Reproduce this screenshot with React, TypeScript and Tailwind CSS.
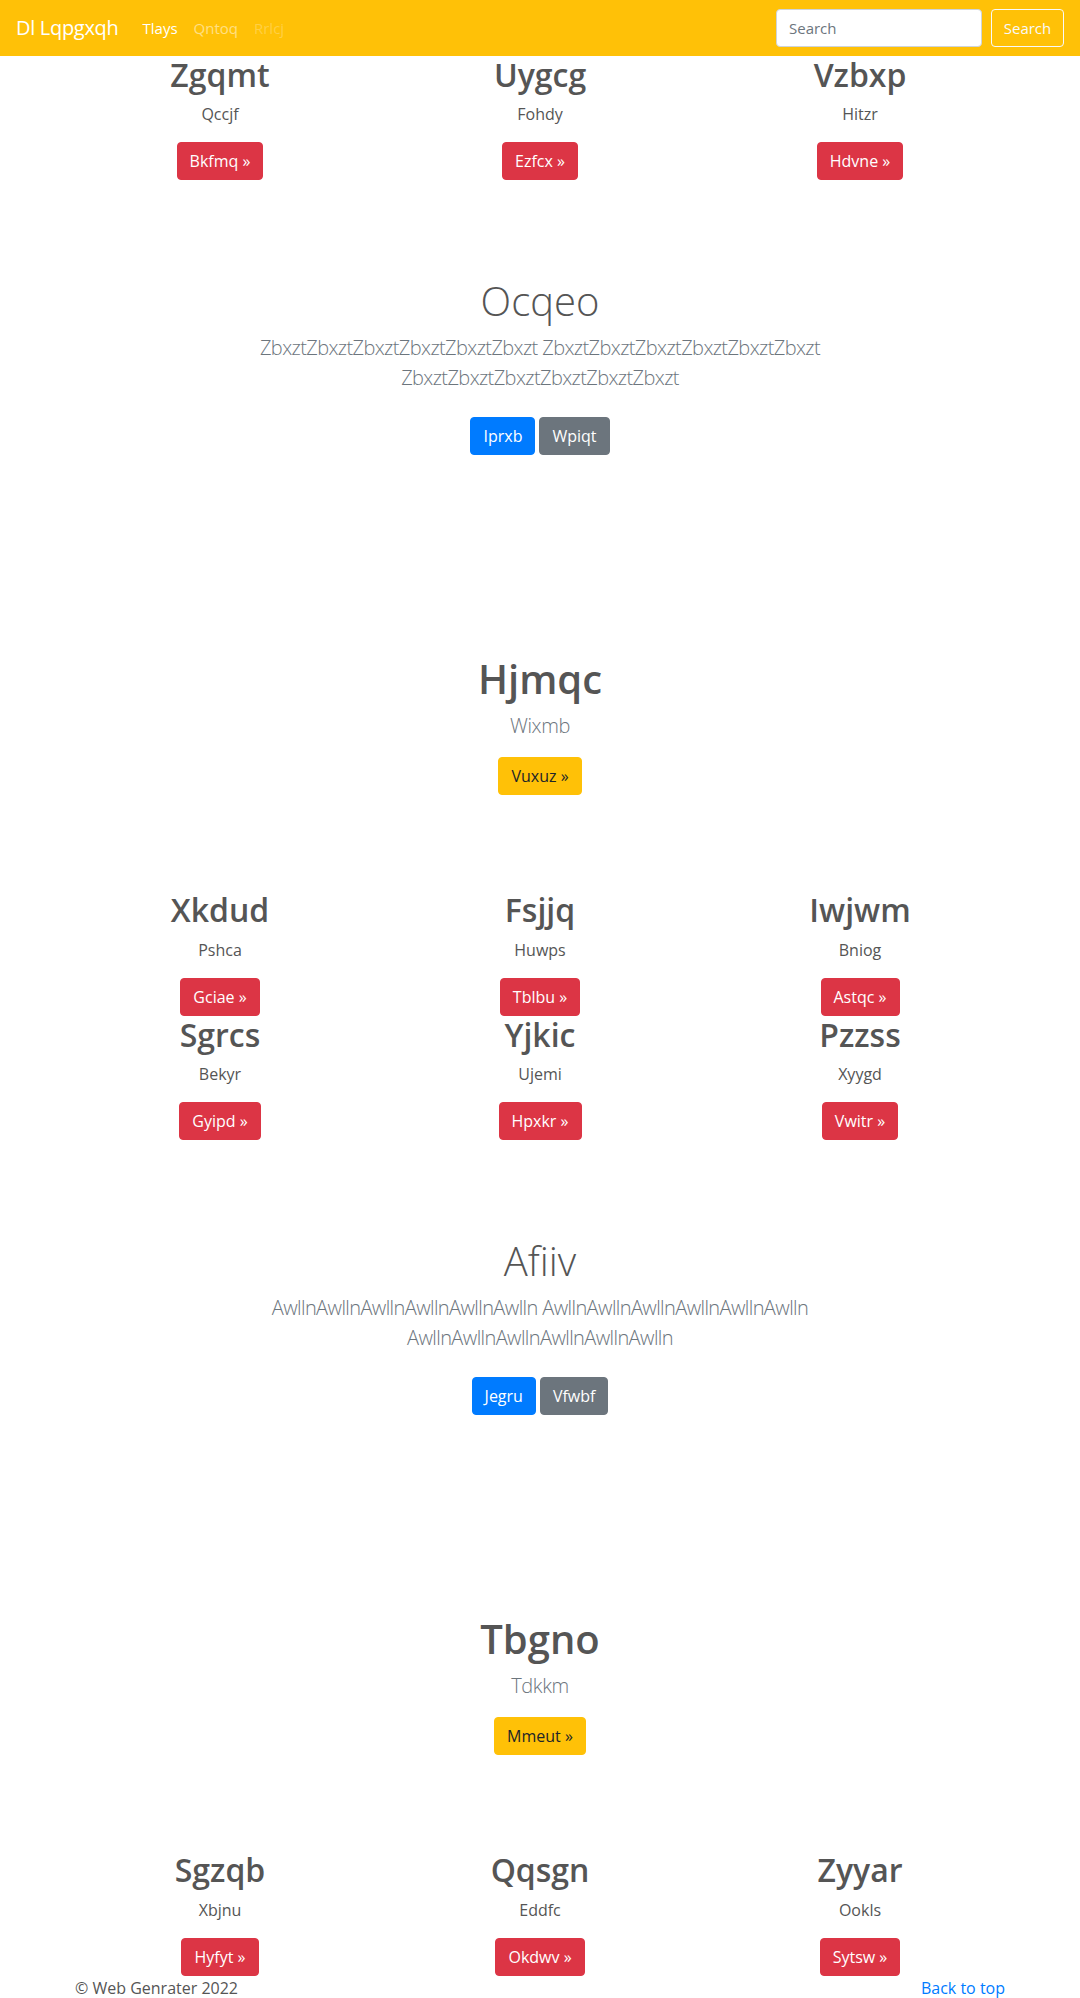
import React from 'react';

type Item = { title: string; text: string; btn: string };
type Section =
  | { kind: 'grid'; items: Item[] }
  | { kind: 'jumbo'; title: string; word: string; primary: string; secondary: string }
  | { kind: 'hero'; title: string; text: string; btn: string };

const SECTIONS: Section[] = [
  {
    kind: 'grid',
    items: [
      { title: 'Zgqmt', text: 'Qccjf', btn: 'Bkfmq' },
      { title: 'Uygcg', text: 'Fohdy', btn: 'Ezfcx' },
      { title: 'Vzbxp', text: 'Hitzr', btn: 'Hdvne' },
    ],
  },
  { kind: 'jumbo', title: 'Ocqeo', word: 'Zbxzt', primary: 'Iprxb', secondary: 'Wpiqt' },
  { kind: 'hero', title: 'Hjmqc', text: 'Wixmb', btn: 'Vuxuz' },
  {
    kind: 'grid',
    items: [
      { title: 'Xkdud', text: 'Pshca', btn: 'Gciae' },
      { title: 'Fsjjq', text: 'Huwps', btn: 'Tblbu' },
      { title: 'Iwjwm', text: 'Bniog', btn: 'Astqc' },
      { title: 'Sgrcs', text: 'Bekyr', btn: 'Gyipd' },
      { title: 'Yjkic', text: 'Ujemi', btn: 'Hpxkr' },
      { title: 'Pzzss', text: 'Xyygd', btn: 'Vwitr' },
    ],
  },
  { kind: 'jumbo', title: 'Afiiv', word: 'Awlln', primary: 'Jegru', secondary: 'Vfwbf' },
  { kind: 'hero', title: 'Tbgno', text: 'Tdkkm', btn: 'Mmeut' },
  {
    kind: 'grid',
    items: [
      { title: 'Sgzqb', text: 'Xbjnu', btn: 'Hyfyt' },
      { title: 'Qqsgn', text: 'Eddfc', btn: 'Okdwv' },
      { title: 'Zyyar', text: 'Ookls', btn: 'Sytsw' },
    ],
  },
];

function Grid({ items }: { items: Item[] }) {
  return (
    <div className="mx-auto w-[960px] grid grid-cols-3">
      {items.map((it) => (
        <div key={it.title} className="px-[15px] text-center">
          <h2 className="text-[32px] leading-[1.2] font-semibold text-[#555] mb-2">{it.title}</h2>
          <p className="text-base leading-6 text-[#555] mb-4">{it.text}</p>
          <button className="h-[38px] px-3 rounded bg-[#dc3545] border border-[#dc3545] text-white text-base leading-6">
            {it.btn} &raquo;
          </button>
        </div>
      ))}
    </div>
  );
}

function Jumbo({ title, word, primary, secondary }: { title: string; word: string; primary: string; secondary: string }) {
  const w = word.repeat(6);
  return (
    <section className="pt-[97px] pb-[96px] text-center">
      <div className="mx-auto w-[640px]">
        <h1 className="text-[40px] leading-[1.2] font-light text-[#555] mb-2">{title}</h1>
        <p className="text-xl leading-[30px] font-light tracking-[-0.6px] text-[#6c757d] mb-4">
          {w} {w} {w}
        </p>
        <div className="flex justify-center gap-1 py-2">
          <button className="h-[38px] px-3 rounded bg-[#007bff] border border-[#007bff] text-white text-base leading-6">{primary}</button>
          <button className="h-[38px] px-3 rounded bg-[#6c757d] border border-[#6c757d] text-white text-base leading-6">{secondary}</button>
        </div>
      </div>
    </section>
  );
}

function Hero({ title, text, btn }: { title: string; text: string; btn: string }) {
  return (
    <section className="pt-[96px] pb-[96px] text-center">
      <h1 className="text-[40px] leading-[1.2] font-semibold text-[#555] mb-2">{title}</h1>
      <p className="text-xl leading-[30px] font-light tracking-[-0.4px] text-[#6c757d] mb-4">{text}</p>
      <button className="h-[38px] px-3 rounded bg-[#ffc107] border border-[#ffc107] text-[#212529] text-base leading-6">
        {btn} &raquo;
      </button>
    </section>
  );
}

export default function App() {
  return (
    <div className="min-h-screen bg-white" style={{ fontFamily: '"Open Sans", "Noto Sans", sans-serif' }}>
      {/* Navbar */}
      <nav className="h-14 bg-[#ffc107] flex items-center px-4">
        <span className="text-white text-xl tracking-[-0.3px] mr-4">Dl Lqpgxqh</span>
        <div className="flex">
          <span className="px-2 text-white text-[15px] font-medium">Tlays</span>
          <span className="px-2 text-white/50 text-[15px]">Qntoq</span>
          <span className="px-2 text-white/25 text-[15px]">Rrlcj</span>
        </div>
        <div className="ml-auto flex items-center gap-[9px]">
          <input
            placeholder="Search"
            className="w-[206px] h-[38px] px-3 rounded bg-white border border-[#ced4da] text-[15px] text-[#495057] placeholder:text-[#6c757d] outline-none"
          />
          <button className="w-[73px] h-[38px] rounded border border-[#f8f9fa] text-[#f8f9fa] text-[15px]">Search</button>
        </div>
      </nav>

      <main>
        {SECTIONS.map((s, i) => {
          if (s.kind === 'grid') return <Grid key={i} items={s.items} />;
          if (s.kind === 'jumbo') return <Jumbo key={i} {...s} />;
          return <Hero key={i} {...s} />;
        })}
      </main>

      <footer className="mx-auto w-[960px] px-[15px] flex justify-between text-base leading-6 text-[#555]">
        <span>&copy; Web Genrater 2022</span>
        <a href="#" className="text-[#007bff]">Back to top</a>
      </footer>
    </div>
  );
}
